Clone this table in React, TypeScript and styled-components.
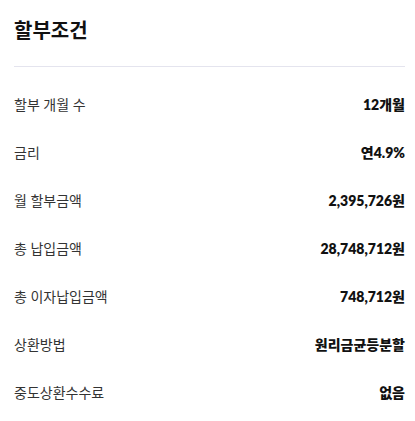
import styled, { createGlobalStyle } from 'styled-components';

const GlobalStyle = createGlobalStyle`
	body {
		margin: 0;
		background: #fff;
		font-family: Lato, "Noto Sans CJK KR", sans-serif;
	}
`;

const Wrapper = styled.section`
	padding: 0 10px 0 14px;
`;

const Title = styled.h2`
	margin: 0;
	height: 67px;
	display: flex;
	align-items: center;
	padding-bottom: 8px;
	box-sizing: border-box;
	font-size: 20px;
	font-weight: 700;
	color: #111;
	border-bottom: 1px solid #e4e4ee;
`;

const List = styled.dl`
	margin: 0;
	padding: 13px 0 0;
`;

const Row = styled.div`
	display: flex;
	justify-content: space-between;
	align-items: center;
	height: 48px;
`;

const Label = styled.dt`
	font-size: 14px;
	color: #333;
`;

const Value = styled.dd`
	margin: 0;
	font-size: 14px;
	font-weight: 800;
	color: #111;
`;

const rows = [
	['할부 개월 수', '12개월'],
	['금리', '연4.9%'],
	['월 할부금액', '2,395,726원'],
	['총 납입금액', '28,748,712원'],
	['총 이자납입금액', '748,712원'],
	['상환방법', '원리금균등분할'],
	['중도상환수수료', '없음'],
];

const App = () => {
	return (
		<>
			<GlobalStyle />
			<Wrapper>
				<Title>할부조건</Title>
				<List>
					{rows.map(([label, value]) => (
						<Row key={label}>
							<Label>{label}</Label>
							<Value>{value}</Value>
						</Row>
					))}
				</List>
			</Wrapper>
		</>
	);
};

export default App;
